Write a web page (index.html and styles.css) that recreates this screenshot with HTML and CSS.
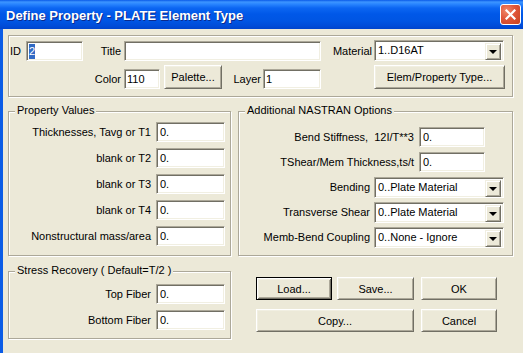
FILE: index.html
```html
<!DOCTYPE html>
<html lang="en">
<head>
  <meta charset="UTF-8">
  <title>Define Property - PLATE Element Type</title>
  <link rel="stylesheet" href="styles.css">
</head>
<body>
  <div class="window">
    <!-- Caption bar -->
    <div class="titlebar">
      <span class="title">Define Property - PLATE Element Type</span>
      <div class="close-btn">
        <svg width="11" height="11" viewBox="0 0 11 11"><path d="M1.5 1.5 L9.5 9.5 M9.5 1.5 L1.5 9.5" stroke="#fff" stroke-width="2.2" stroke-linecap="square"/></svg>
      </div>
    </div>

    <div class="client">
      <!-- ID / Title / Material -->
      <div class="group top-group">
        <div class="row row-main">
          <span class="lbl lbl-id">ID</span>
          <div class="field f-id"><span class="selected">2</span></div>
          <span class="lbl lbl-title">Title</span>
          <div class="field f-title"></div>
          <span class="lbl lbl-material">Material</span>
          <div class="combo f-material"><span class="combo-text">1..D16AT</span><span class="drop"></span></div>
        </div>
        <div class="row row-sub">
          <span class="lbl lbl-color">Color</span>
          <div class="field f-color">110</div>
          <div class="btn btn-palette">Palette...</div>
          <span class="lbl lbl-layer">Layer</span>
          <div class="field f-layer">1</div>
          <div class="btn btn-elem">Elem/Property Type...</div>
        </div>
      </div>

      <div class="mid">
        <!-- Property Values -->
        <div class="group props">
          <span class="caption">Property Values</span>
          <div class="form-row"><span class="lbl lbl-prop">Thicknesses, Tavg or T1</span><div class="field f-prop">0.</div></div>
          <div class="form-row"><span class="lbl lbl-prop">blank or T2</span><div class="field f-prop">0.</div></div>
          <div class="form-row"><span class="lbl lbl-prop">blank or T3</span><div class="field f-prop">0.</div></div>
          <div class="form-row"><span class="lbl lbl-prop">blank or T4</span><div class="field f-prop">0.</div></div>
          <div class="form-row"><span class="lbl lbl-prop">Nonstructural mass/area</span><div class="field f-prop">0.</div></div>
        </div>

        <!-- Additional NASTRAN Options -->
        <div class="group nastran">
          <span class="caption">Additional NASTRAN Options</span>
          <div class="form-row nrow"><span class="lbl lbl-ninput">Bend Stiffness,&nbsp; 12I/T**3</span><div class="field f-ninput">0.</div></div>
          <div class="form-row nrow"><span class="lbl lbl-ninput">TShear/Mem Thickness,ts/t</span><div class="field f-ninput">0.</div></div>
          <div class="form-row nrow"><span class="lbl lbl-ncombo">Bending</span><div class="combo f-ncombo"><span class="combo-text">0..Plate Material</span><span class="drop"></span></div></div>
          <div class="form-row nrow"><span class="lbl lbl-ncombo">Transverse Shear</span><div class="combo f-ncombo"><span class="combo-text">0..Plate Material</span><span class="drop"></span></div></div>
          <div class="form-row nrow"><span class="lbl lbl-ncombo">Memb-Bend Coupling</span><div class="combo f-ncombo"><span class="combo-text">0..None - Ignore</span><span class="drop"></span></div></div>
        </div>
      </div>

      <div class="bottom">
        <!-- Stress Recovery -->
        <div class="group stress">
          <span class="caption">Stress Recovery ( Default=T/2 )</span>
          <div class="form-row"><span class="lbl lbl-prop">Top Fiber</span><div class="field f-prop">0.</div></div>
          <div class="form-row"><span class="lbl lbl-prop">Bottom Fiber</span><div class="field f-prop">0.</div></div>
        </div>

        <div class="buttons">
          <div class="btn-row">
            <div class="btn btn-default btn-load">Load...</div>
            <div class="btn btn-save">Save...</div>
            <div class="btn btn-ok">OK</div>
          </div>
          <div class="btn-row">
            <div class="btn btn-copy">Copy...</div>
            <div class="btn btn-cancel">Cancel</div>
          </div>
        </div>
      </div>
    </div>
  </div>
</body>
</html>
```

FILE: styles.css
```css
* {
  box-sizing: border-box;
}

body {
  margin: 0;
  width: 523px;
  height: 353px;
  overflow: hidden;
  background-color: #ece9d8;
  font-family: "Liberation Sans", Arial, sans-serif;
  font-size: 11px;
  color: #000;
}

.window {
  height: 353px;
  display: flex;
  flex-direction: column;
}

/* Caption bar */
.titlebar {
  height: 29px;
  flex: none;
  display: flex;
  align-items: center;
  justify-content: space-between;
  padding: 0 2px 0 6px;
  background: linear-gradient(to bottom, #0a5ae8 0px, #3d95ff 2px, #2a86ff 4px, #0c66f2 8px, #0058e8 14px, #0055e3 21px, #004cd8 26px, #0044cc 29px);
}

.title {
  color: #fff;
  font-weight: bold;
  font-size: 13px;
  text-shadow: 1px 1px #0b2a8c;
  padding-top: 1px;
}

.close-btn {
  width: 21px;
  height: 21px;
  border: 1px solid #fff;
  border-radius: 3px;
  background: radial-gradient(circle at 30% 30%, #f0886a 0%, #e0563a 45%, #c8411d 100%);
  display: flex;
  align-items: center;
  justify-content: center;
}

.client {
  flex: 1;
  border-left: 3px solid #0b5ce6;
  padding: 6px 0 0 5px;
}

/* Etched group frame */
.group {
  position: relative;
  border: 1px solid #aca899;
  box-shadow: inset 1px 1px #fff, 1px 1px #fff;
}

.caption {
  position: absolute;
  top: -8px;
  left: 6px;
  padding: 0 2px;
  line-height: 13px;
  background-color: #ece9d8;
}

.lbl {
  line-height: 20px;
  white-space: nowrap;
}

/* Sunken edit field */
.field {
  height: 20px;
  background-color: #fff;
  border: 1px solid;
  border-color: #aca899 #fff #fff #aca899;
  box-shadow: inset 1px 1px #716f64, inset -1px -1px #f1efe2;
  padding: 0 3px;
  line-height: 18px;
  white-space: nowrap;
  overflow: hidden;
}

.selected {
  background-color: #316ac5;
  color: #fff;
  padding: 1px 0 2px;
}

/* Drop-down list */
.combo {
  height: 21px;
  display: flex;
  background-color: #fff;
  border: 1px solid;
  border-color: #aca899 #fff #fff #aca899;
  box-shadow: inset 1px 1px #716f64, inset -1px -1px #f1efe2;
  padding: 2px;
}

.combo-text {
  flex: 1;
  line-height: 15px;
  padding-left: 1px;
  white-space: nowrap;
}

.drop {
  width: 16px;
  height: 17px;
  position: relative;
  background-color: #ece9d8;
  border: 1px solid;
  border-color: #f1efe2 #716f64 #716f64 #f1efe2;
  box-shadow: inset 1px 1px #fff, inset -1px -1px #aca899;
}

.drop::after {
  content: "";
  position: absolute;
  left: 3px;
  top: 6px;
  border-left: 4px solid transparent;
  border-right: 4px solid transparent;
  border-top: 4px solid #000;
}

/* Raised push button */
.btn {
  display: flex;
  align-items: center;
  justify-content: center;
  background-color: #ece9d8;
  border: 1px solid;
  border-color: #fff #716f64 #716f64 #fff;
  box-shadow: inset 1px 1px #f1efe2, inset -1px -1px #aca899;
  white-space: nowrap;
}

.btn-default {
  border-color: #000;
  box-shadow: inset 1px 1px #fff, inset -1px -1px #716f64, inset 2px 2px #f1efe2, inset -2px -2px #aca899;
}

/* Top group */
.top-group {
  width: 505px;
  height: 62px;
  padding: 5px 0 0 1px;
}

.row {
  display: flex;
}

.row-main {
  height: 20px;
  align-items: flex-start;
}

.lbl-id { width: 16px; }
.f-id { width: 57px; padding-left: 2px; }
.lbl-title { width: 41px; text-align: right; padding-right: 3px; }
.f-title { width: 197px; }
.lbl-material { width: 53px; text-align: right; padding-right: 2px; }
.f-material { width: 130px; margin-top: -1px; }

.row-sub {
  height: 24px;
  margin-top: 4px;
  align-items: flex-end;
}

.lbl-color { width: 114px; text-align: right; padding-right: 3px; }
.f-color { width: 36px; padding-left: 2px; }
.btn-palette { width: 58px; height: 24px; margin-left: 4px; }
.lbl-layer { width: 41px; text-align: right; padding-right: 2px; }
.f-layer { width: 58px; padding-left: 2px; }
.btn-elem { width: 131px; height: 24px; margin-left: 53px; }

/* Middle groups */
.mid {
  display: flex;
  margin-top: 14px;
}

.props {
  width: 223px;
  height: 145px;
  padding-top: 10px;
  display: flex;
  flex-direction: column;
  gap: 6px;
}

.form-row {
  display: flex;
  height: 20px;
}

.lbl-prop { width: 147px; text-align: right; padding-right: 5px; }
.f-prop { width: 69px; }

.nastran {
  width: 275px;
  height: 145px;
  margin-left: 7px;
  padding-top: 15px;
  display: flex;
  flex-direction: column;
  gap: 5px;
}

.lbl-ninput { width: 180px; text-align: right; padding-right: 5px; }
.f-ninput { width: 66px; }
.lbl-ncombo { width: 135px; text-align: right; padding-right: 4px; }
.f-ncombo { width: 130px; }

/* Bottom */
.bottom {
  display: flex;
  margin-top: 15px;
}

.stress {
  width: 223px;
  height: 68px;
  padding-top: 12px;
  display: flex;
  flex-direction: column;
  gap: 6px;
}

.buttons {
  margin: 6px 0 0 25px;
  display: flex;
  flex-direction: column;
  gap: 9px;
}

.btn-row {
  display: flex;
  height: 23px;
}

.btn-load { width: 76px; margin-right: 5px; }
.btn-save { width: 77px; margin-right: 7px; }
.btn-ok { width: 76px; }
.btn-copy { width: 158px; margin-right: 7px; }
.btn-cancel { width: 76px; }
```
